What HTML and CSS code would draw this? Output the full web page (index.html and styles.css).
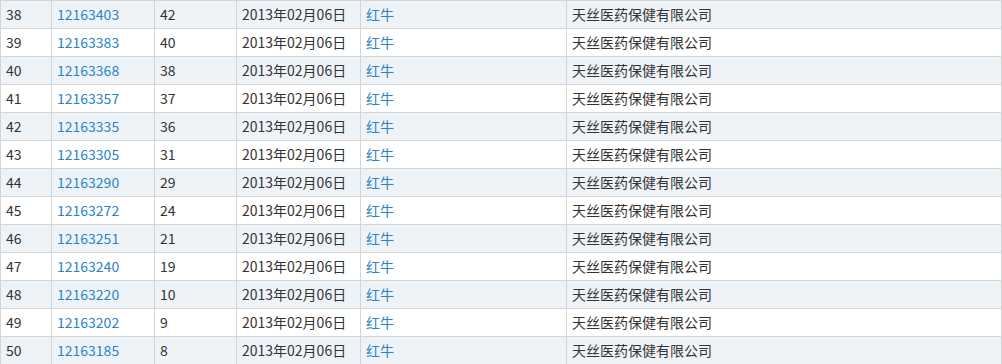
FILE: index.html
```html
<!DOCTYPE html>
<html>
<head>
<meta charset="utf-8">
<link rel="stylesheet" href="styles.css">
</head>
<body>
<table class="grid">
<colgroup>
<col class="c1"><col class="c2"><col class="c3"><col class="c4"><col class="c5"><col class="c6">
</colgroup>
<tbody>
<tr class="alt"><td>38</td><td><a>12163403</a></td><td>42</td><td>2013年02月06日</td><td><a>红牛</a></td><td>天丝医药保健有限公司</td></tr>
<tr><td>39</td><td><a>12163383</a></td><td>40</td><td>2013年02月06日</td><td><a>红牛</a></td><td>天丝医药保健有限公司</td></tr>
<tr class="alt"><td>40</td><td><a>12163368</a></td><td>38</td><td>2013年02月06日</td><td><a>红牛</a></td><td>天丝医药保健有限公司</td></tr>
<tr><td>41</td><td><a>12163357</a></td><td>37</td><td>2013年02月06日</td><td><a>红牛</a></td><td>天丝医药保健有限公司</td></tr>
<tr class="alt"><td>42</td><td><a>12163335</a></td><td>36</td><td>2013年02月06日</td><td><a>红牛</a></td><td>天丝医药保健有限公司</td></tr>
<tr><td>43</td><td><a>12163305</a></td><td>31</td><td>2013年02月06日</td><td><a>红牛</a></td><td>天丝医药保健有限公司</td></tr>
<tr class="alt"><td>44</td><td><a>12163290</a></td><td>29</td><td>2013年02月06日</td><td><a>红牛</a></td><td>天丝医药保健有限公司</td></tr>
<tr><td>45</td><td><a>12163272</a></td><td>24</td><td>2013年02月06日</td><td><a>红牛</a></td><td>天丝医药保健有限公司</td></tr>
<tr class="alt"><td>46</td><td><a>12163251</a></td><td>21</td><td>2013年02月06日</td><td><a>红牛</a></td><td>天丝医药保健有限公司</td></tr>
<tr><td>47</td><td><a>12163240</a></td><td>19</td><td>2013年02月06日</td><td><a>红牛</a></td><td>天丝医药保健有限公司</td></tr>
<tr class="alt"><td>48</td><td><a>12163220</a></td><td>10</td><td>2013年02月06日</td><td><a>红牛</a></td><td>天丝医药保健有限公司</td></tr>
<tr><td>49</td><td><a>12163202</a></td><td>9</td><td>2013年02月06日</td><td><a>红牛</a></td><td>天丝医药保健有限公司</td></tr>
<tr class="alt"><td>50</td><td><a>12163185</a></td><td>8</td><td>2013年02月06日</td><td><a>红牛</a></td><td>天丝医药保健有限公司</td></tr>
</tbody>
</table>
</body>
</html>
```
FILE: styles.css
```css
html, body {
  margin: 0;
  padding: 0;
  background: #ffffff;
  overflow: hidden;
}
.grid {
  border-collapse: collapse;
  table-layout: fixed;
  width: 1001px;
  font-family: "Noto Sans CJK SC", "Microsoft YaHei", sans-serif;
  font-size: 14px;
  color: #333333;
}
.c1 { width: 51px; }
.c2 { width: 103px; }
.c3 { width: 82px; }
.c4 { width: 124px; }
.c5 { width: 206px; }
.c6 { width: 435px; }
.grid td {
  height: 27px;
  padding: 0 0 0 5px;
  border-top: 1px solid #d4d4d4;
  border-left: 1px solid #d4d4d4;
  border-right: 1px solid #d4d4d4;
  white-space: nowrap;
  line-height: 27px;
  box-sizing: content-box;
}
.grid tr.alt td {
  background: #eef3f8;
}
.grid a {
  color: #2b83c8;
  text-decoration: none;
}
```
